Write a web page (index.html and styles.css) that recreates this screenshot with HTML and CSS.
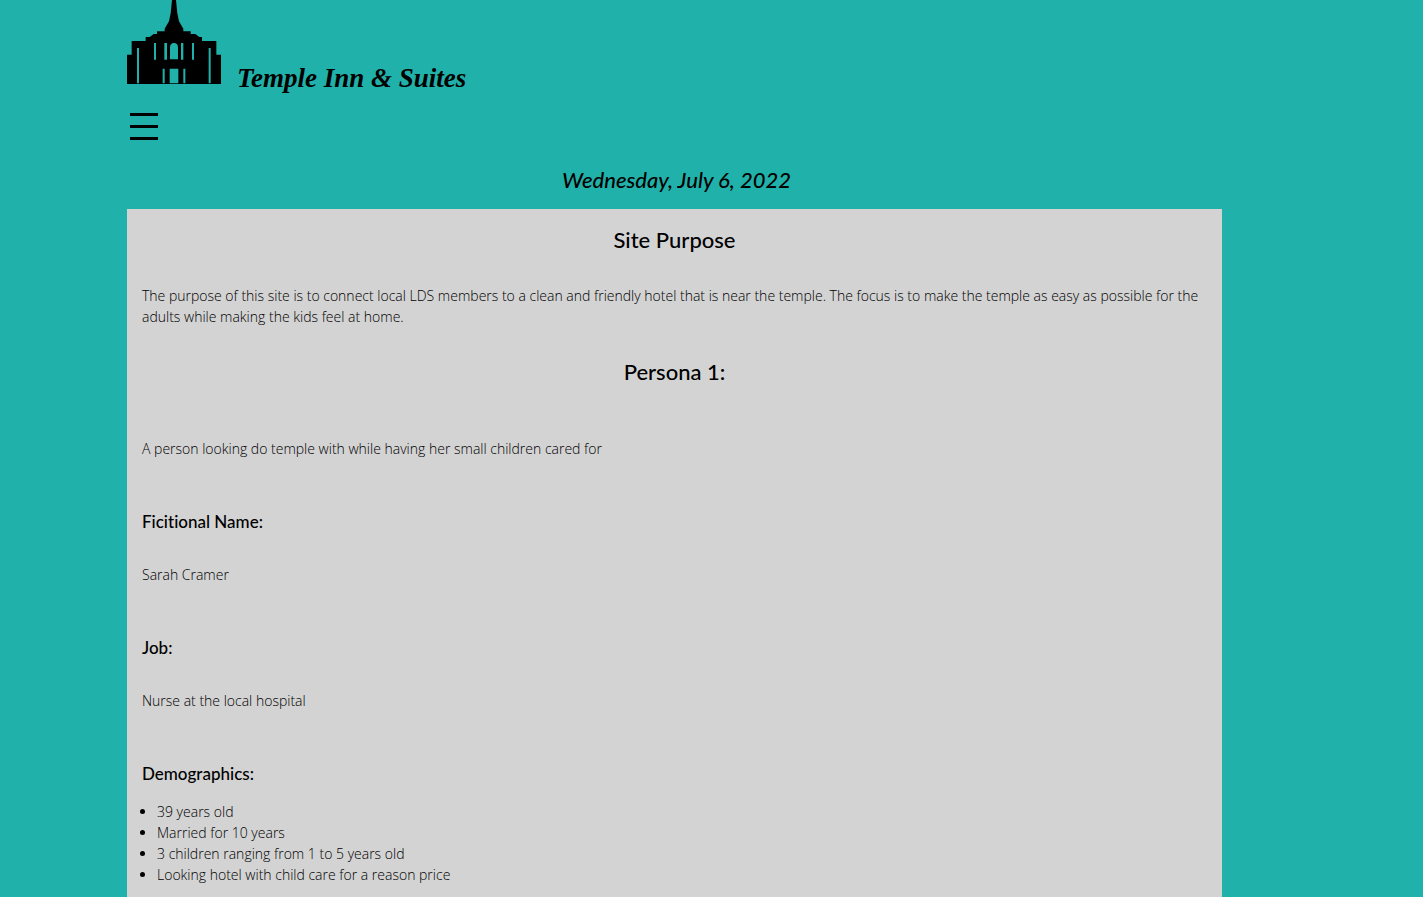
FILE: index.html
```html
<!DOCTYPE html>
<html lang="en">
<head>
<meta charset="utf-8">
<title>Temple Inn &amp; Suites</title>
<link rel="stylesheet" href="styles.css">
</head>
<body>
<div class="page">
  <header class="header">
    <div class="brand">
      <svg class="logo" viewBox="21 0 282 252" aria-hidden="true">
        <path d="M156 0h12l4 40 5 24 13 22v8h22v8h14l12 9h8v12h43v41h14v88H21v-88h14v-41h42v-12h12l12-9h10v-8h23v-8l13-22 5-24z"/>
        <path class="cut" d="M51 144h6v106h-6zM266 144h6v106h-6zM102 129h6v50h-6zM133 129h8v50h-8zM183 129h7v50h-7zM216 129h6v50h-6zM150 178v-35q0-14 12-14t12 14v35zM149 206h26v44h-26zM128 206h6v44h-6zM190 206h6v44h-6z"/>
      </svg>
      <span class="brand-name">Temple Inn &amp; Suites</span>
    </div>
    <button class="menu" type="button" aria-label="Menu">
      <svg class="menu-icon" viewBox="0 0 28 28" aria-hidden="true"><path d="M0 1h28v3H0zM0 13h28v3H0zM0 25h28v3H0z"/></svg>
    </button>
    <p class="date">Wednesday, July 6, 2022</p>
  </header>
  <main class="content">
    <h2 class="title">Site Purpose</h2>
    <p class="text intro">The purpose of this site is to connect local LDS members to a clean and friendly hotel that is near the temple. The focus is to make the temple as easy as possible for the adults while making the kids feel at home.</p>
    <h2 class="title persona">Persona 1:</h2>
    <p class="text">A person looking do temple with while having her small children cared for</p>
    <h3 class="label">Ficitional Name:</h3>
    <p class="text">Sarah Cramer</p>
    <h3 class="label">Job:</h3>
    <p class="text">Nurse at the local hospital</p>
    <h3 class="label list-label">Demographics:</h3>
    <ul class="list">
      <li>39 years old</li>
      <li>Married for 10 years</li>
      <li>3 children ranging from 1 to 5 years old</li>
      <li>Looking hotel with child care for a reason price</li>
    </ul>
  </main>
</div>
</body>
</html>
```
FILE: styles.css
```css
body {
  margin: 0;
  background: #20b2aa;
  color: #000;
  font: 300 14px/21px "Open Sans", sans-serif;
}
.page {
  display: grid;
  grid-template-columns: 127fr 1095fr 201fr;
}
.header, .content { grid-column: 2; min-width: 0; }
.brand { display: flex; align-items: flex-end; gap: 16px; }
.logo { width: 94px; height: 84px; margin-bottom: 12px; }
.cut { fill: #20b2aa; }
.brand-name {
  font: italic bold 27px/36px "Liberation Serif", serif;
}
.menu {
  display: block;
  margin: 16px 0 0;
  padding: 0 3px;
  border: 0;
  background: none;
}
.menu-icon { display: block; width: 28px; height: 28px; }
.date, .title, .label {
  font-family: Lato, sans-serif;
  font-weight: 500;
  font-variant-ligatures: none;
}
.date, .title {
  font-size: 22px;
  line-height: 32px;
  text-align: center;
}
.date {
  margin: 24px 0 13px;
  padding-left: 4px;
  font-style: italic;
}
.content { background: #d3d3d3; padding: 15px 15px 29px; }
.title { margin: 0 0 29px; }
.text { margin: 0 0 50px; }
.intro { margin-bottom: 29px; }
.persona { margin-bottom: 50px; }
.label {
  margin: 0 0 29px;
  font-size: 17px;
  line-height: 26px;
}
.list-label { margin-bottom: 14px; }
.list { margin: 0; padding-left: 15px; }
```
